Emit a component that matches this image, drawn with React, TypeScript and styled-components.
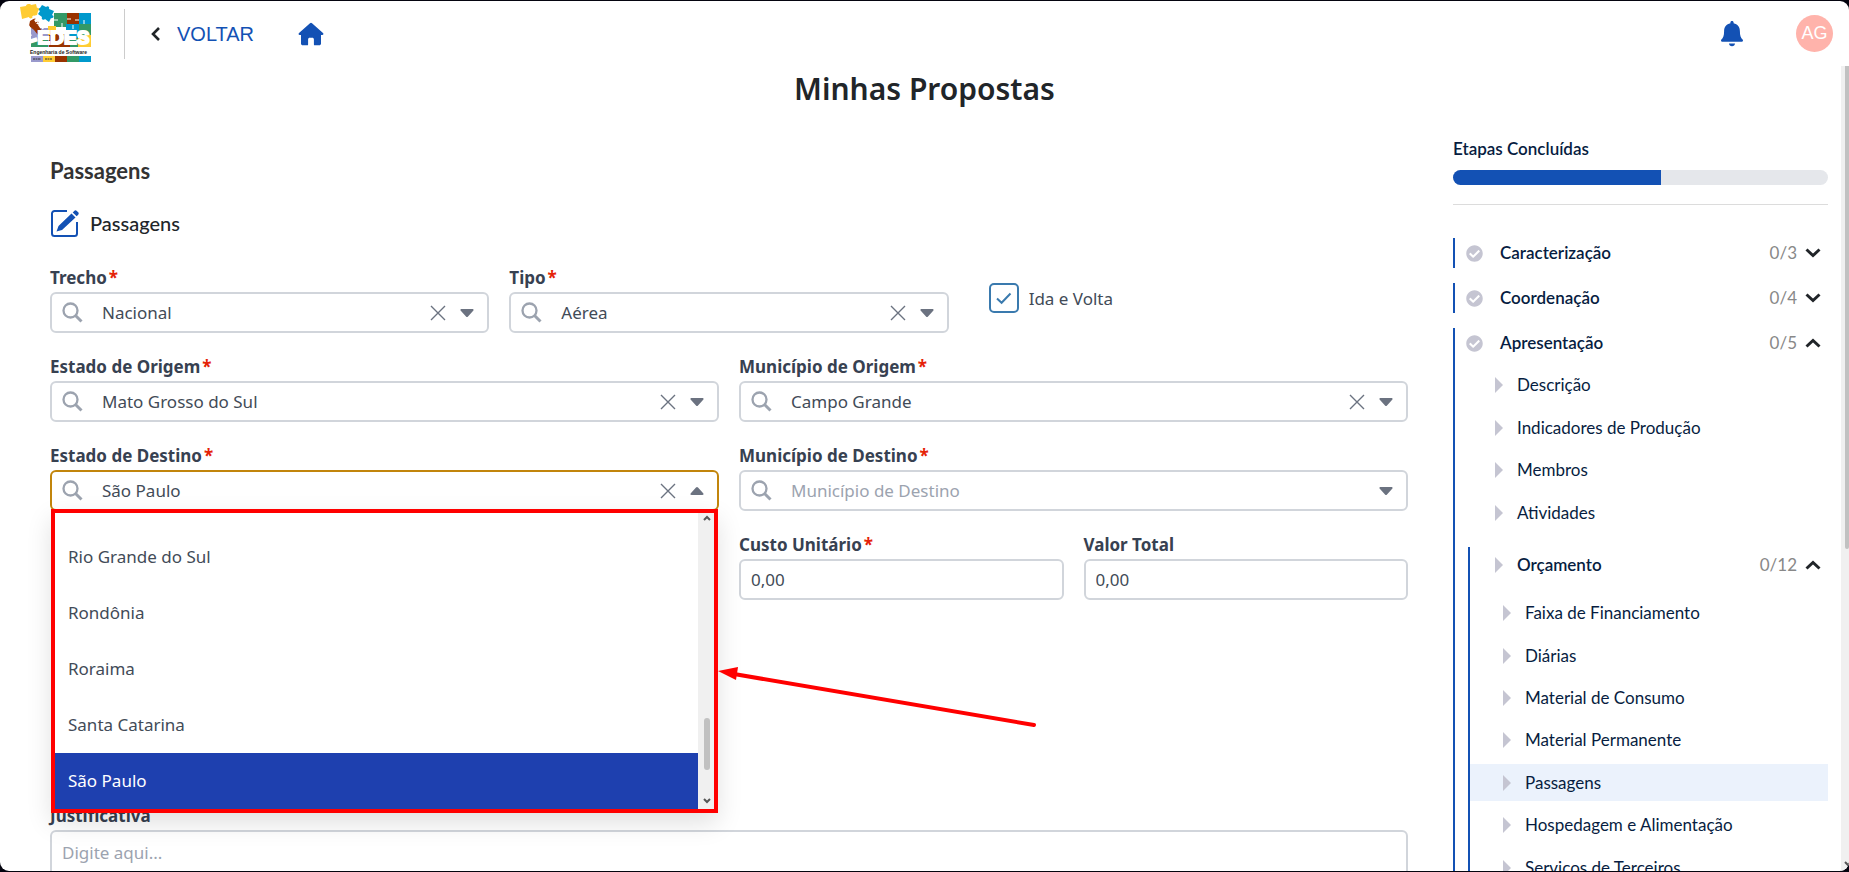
import React from 'react';
import styled, { createGlobalStyle } from 'styled-components';
import { FaCheckCircle } from 'react-icons/fa';

const color = {
  primary: '#1351b4',
  ink: '#212529',
  label: '#374151',
  text: '#424b57',
  muted: '#9ca3af',
  border: '#d1d5db',
  icon: '#6b7280',
  navy: '#071d41',
  mark: '#ff0000',
};

const formFont = "'Noto Sans', 'Open Sans', sans-serif";
const menuFont = "Lato, 'Open Sans', sans-serif";
const barFont = "'Liberation Sans', Arial, sans-serif";

const GlobalStyle = createGlobalStyle`
  *, *::before, *::after { box-sizing: border-box; }
  body { margin: 0; background: #04040f; font-family: ${formFont}; }
  h1, h2, h3, p, ul { margin: 0; padding: 0; }
  ul { list-style: none; }
  button { padding: 0; border: 0; background: none; font: inherit; color: inherit; cursor: pointer; }
  a { color: inherit; text-decoration: none; }
  svg { display: block; flex: none; }
`;

const Backdrop = styled.div`
  height: 100vh;
  padding: 1px 0;
`;

const Page = styled.div`
  position: relative;
  display: flex;
  flex-direction: column;
  height: 100%;
  overflow: hidden;
  border-radius: 9px;
  background: #fff;
`;

const TopBar = styled.header`
  display: flex;
  align-items: center;
  flex: none;
  height: 65px;
  padding: 0 16px 0 20px;
  font-family: ${barFont};
`;

const Divider = styled.span`
  width: 1px;
  height: 50px;
  margin: 0 26px 0 31px;
  background: #ccc;
`;

const BackLink = styled.a`
  display: flex;
  align-items: center;
  gap: 17px;
  color: ${color.primary};
  font-size: 20px;
  line-height: 24px;
`;

const IconButton = styled.button`
  display: flex;
  color: ${color.primary};
`;

const HomeLink = styled.a`
  margin-left: 44px;
  color: ${color.primary};
`;

const Account = styled.div`
  display: flex;
  align-items: center;
  gap: 53px;
  margin-left: auto;
`;

const Avatar = styled.button`
  display: grid;
  place-items: center;
  width: 37px;
  height: 37px;
  border-radius: 50%;
  background: #ffb3ab;
  color: #fff;
  font-size: 18px;
`;

const Content = styled.div`
  flex: 1;
  min-height: 0;
  overflow: hidden;
`;

const Title = styled.h1`
  padding-top: 3px;
  color: ${color.ink};
  font-size: 30px;
  font-weight: 600;
  line-height: 40px;
  text-align: center;
`;

const Columns = styled.div`
  display: grid;
  grid-template-columns: minmax(0, 1fr) 375px;
  gap: 45px;
  padding: 0 21px 0 50px;
`;

const Form = styled.form`
  padding-top: 47px;
`;

const SectionTitle = styled.h2`
  color: #333;
  font-family: ${menuFont};
  font-size: 22px;
  font-weight: 700;
  line-height: 30px;
`;

const Subsection = styled.h3`
  display: flex;
  align-items: center;
  gap: 10px;
  margin: 22px 0 26px;
  color: ${color.ink};
  font-family: ${menuFont};
  font-size: 20px;
  font-weight: 500;
  line-height: 30px;
`;

const Fields = styled.div`
  display: grid;
  grid-template-columns: repeat(12, minmax(0, 1fr));
  gap: 20px;
`;

const FieldBox = styled.div<{ $span: number }>`
  grid-column: span ${(p) => p.$span};
  min-width: 0;
`;

const Label = styled.label`
  display: block;
  height: 28px;
  color: ${color.label};
  font-size: 17px;
  font-weight: 700;
  line-height: 28px;
`;

const Required = styled.span`
  margin-left: 2px;
  color: #e52207;
`;

const Control = styled.div<{ $active?: boolean }>`
  position: relative;
  display: flex;
  align-items: center;
  height: 41px;
  padding: 0 13px 0 10px;
  border: 2px solid ${(p) => (p.$active ? '#c2850c' : color.border)};
  border-radius: 6px;
  background: #fff;
`;

const Input = styled.input`
  flex: 1;
  min-width: 0;
  padding: 0;
  border: 0;
  outline: 0;
  background: none;
  color: ${color.text};
  font: 17px/24px ${formFont};
  &::placeholder { color: ${color.muted}; opacity: 1; }
`;

const ComboInput = styled(Input)`
  margin: 0 12px 0 19px;
`;

const ComboButton = styled.button`
  display: flex;
  margin-left: 14px;
`;

const CheckLabel = styled.label`
  display: flex;
  align-items: center;
  gap: 10px;
  height: 30px;
  margin: 19px 0 0 20px;
  color: ${color.text};
  font-size: 17px;
`;

const Checkbox = styled.input`
  appearance: none;
  width: 30px;
  height: 30px;
  margin: 0;
  border: 2px solid #3a7aae;
  border-radius: 5px;
  background: #fff url("data:image/svg+xml,%3Csvg xmlns='http://www.w3.org/2000/svg' viewBox='0 0 26 26'%3E%3Cpath d='M6 13.5l4.6 4.3L19.500 8.500' fill='none' stroke='%233a7aae' stroke-width='2'/%3E%3C/svg%3E") center / 26px 26px;
`;

const Menu = styled.div`
  position: absolute;
  z-index: 2;
  top: 100%;
  left: -1px;
  right: -1px;
  display: flex;
  height: 304px;
  border: 4px solid ${color.mark};
  background: #fff;
  box-shadow: 0 10px 24px rgba(0, 0, 0, 0.12);
`;

const Options = styled.ul`
  display: flex;
  flex: 1;
  flex-direction: column;
  justify-content: flex-end;
`;

const Option = styled.li<{ $selected?: boolean }>`
  height: 56px;
  padding: 0 13px;
  background: ${(p) => (p.$selected ? '#1e40af' : '#fff')};
  color: ${(p) => (p.$selected ? '#fff' : color.text)};
  font-size: 17px;
  line-height: 56px;
`;

const MenuScroll = styled.div`
  display: flex;
  flex-direction: column;
  align-items: center;
  width: 16px;
  padding: 2px 0 5px 2px;
  background: #f0f0f0;
`;

const MenuThumb = styled.span`
  width: 6px;
  height: 52px;
  margin: auto 0 28px;
  border-radius: 3px;
  background: #c1c1c1;
`;

const Pointer = styled.svg`
  position: absolute;
  top: 154px;
  left: 100%;
  margin-left: 4px;
`;

const Notes = styled.div`
  padding-top: 202px;
`;

const TextArea = styled.textarea`
  display: block;
  width: 100%;
  height: 120px;
  padding: 9px 10px;
  border: 2px solid ${color.border};
  border-radius: 6px;
  outline: 0;
  resize: none;
  color: ${color.text};
  font: 17px/24px ${formFont};
  &::placeholder { color: ${color.muted}; opacity: 1; }
`;

const Sidebar = styled.aside`
  padding-top: 30px;
  color: ${color.navy};
  font-family: ${menuFont};
  font-size: 17px;
  line-height: 20px;
`;

const ProgressTitle = styled.label`
  display: block;
  font-weight: 600;
`;

const Progress = styled.progress`
  appearance: none;
  display: block;
  width: 100%;
  height: 15px;
  margin-top: 11px;
  overflow: hidden;
  border: 0;
  border-radius: 8px;
  background: #e5e7eb;
  &::-webkit-progress-bar { background: #e5e7eb; }
  &::-webkit-progress-value { background: ${color.primary}; }
`;

const Rule = styled.hr`
  height: 1px;
  margin: 19px 0 33px;
  border: 0;
  background: #dcdcdc;
`;

const Stage = styled.section`
  margin-bottom: 15px;
  border-left: 2px solid ${color.primary};
`;

const StageHead = styled.button`
  display: flex;
  align-items: center;
  width: 100%;
  height: 30px;
  padding: 0 7px 0 11px;
  color: #c5c5d2;
`;

const StageName = styled.span`
  margin-left: 17px;
  color: ${color.navy};
  font-weight: 600;
`;

const Count = styled.span`
  margin: 0 8px 0 auto;
  color: #888;
  font-weight: 400;
`;

const Steps = styled.ul<{ $height: number }>`
  display: grid;
  grid-auto-rows: 1fr;
  align-items: center;
  min-height: ${(p) => p.$height}px;
`;

const StepLink = styled.a<{ $current?: boolean; $indent: number }>`
  display: flex;
  align-items: center;
  gap: 14px;
  height: 37px;
  padding-left: ${(p) => p.$indent}px;
  background: ${(p) => (p.$current ? '#ebf2fc' : 'transparent')};
`;

const StageSteps = styled.div`
  padding-top: 6px;
`;

const Budget = styled.section`
  margin: 13px 0 0 13px;
  border-left: 2px solid ${color.primary};
`;

const BudgetHead = styled(StageHead)`
  height: 45px;
  padding-left: 25px;
  padding-bottom: 10px;
`;

const BudgetName = styled(StageName)`
  margin-left: 14px;
`;

const PageScroll = styled.div`
  position: absolute;
  top: 65px;
  right: 0;
  bottom: 0;
  width: 8px;
  padding-left: 4px;
  background: #f0f0f0;
`;

const PageThumb = styled.div`
  height: 60%;
  border-radius: 0 0 2px 2px;
  background: #c1c1c1;
`;

const ScrollArrow = styled.div`
  position: absolute;
  right: -3px;
  bottom: 4px;
`;

const Logo = () => (
  <svg width="73" height="60" viewBox="0 0 73 60" role="img" aria-label="LEDES Engenharia de Software">
    <path fill="#9999cc" d="M11 24h18v19H11z" />
    <path fill="#339966" d="M34 9h13v14H34zM11 36h17v7H11z" />
    <path fill="#993300" d="M47 9h12v12H47zM29 30h21v13H29z" />
    <path fill="#0099cc" d="M59 9h12v18H59zM46 20h13v15H46z" />
    <path fill="#339966" d="M59 20h12v14H59zM50 34h10v9H50z" />
    <path fill="#ffcc33" d="M58 31h13v12H58zM28 22h8v9h-8z" />
    <path fill="#ffcc33" d="M0 3l6-1c0-2 4-3 5-1l5-1 1 4c2-1 3 2 1 3l-1 4-4 1c0 3-4 3-4 1l-7 2z" />
    <path fill="#0099cc" d="M22 1l4 2c2-2 4 0 3 2l5 2-2 4c3 1 1 4-1 3l-2 4-4-3c-2 2-4 0-3-2l-4-3 2-3c-2-1-1-3 0-3z" />
    <path fill="#993300" d="M10 17l5-3 2 4c2-1 3 2 1 3l4 6-4 4-4-5-5-4z" />
    <path fill="none" stroke="#fff" strokeWidth="1" d="M34 16h4M42 23v-4M47 15h4M53 21v4M59 16h-4M64 20v-4M40 30v4M50 36h-4M58 37h4M66 34v4M20 36v-4" />
    <text
      x="6"
      y="40"
      rotate="-18 0 0 0 0"
      fill="#fff"
      stroke="#fff"
      strokeWidth="2"
      fontFamily="'Liberation Sans', sans-serif"
      fontSize="19"
      fontWeight="700"
    >
      LEDES
    </text>
    <path fill="none" stroke="#fff" d="M6 17l3 6-2 2 4 7M13 12l4 7 3 1 3 5" strokeWidth="2" strokeDasharray="3 1" />
    <text x="10" y="50" fontSize="5" fontWeight="700" fill="#222" fontFamily="'Liberation Sans', sans-serif">
      Engenharia de Software
    </text>
    <path fill="#9999cc" d="M11 52h12v6H11z" />
    <path fill="#ffcc33" d="M23 52h12v6H23z" />
    <path fill="#993300" d="M35 52h12v6H35z" />
    <path fill="#339966" d="M47 52h12v6H47z" />
    <path fill="#0099cc" d="M59 52h12v6H59z" />
    <path stroke="#333" d="M13 55h8M25 55h7" strokeDasharray="2 .5" />
  </svg>
);

const BackChevron = () => (
  <svg width="9" height="14" viewBox="0 0 9 14" fill="none" stroke={color.ink} strokeWidth="2.600">
    <path d="M8 1L2 7l6 6" />
  </svg>
);

const HomeIcon = () => (
  <svg width="26" height="24" viewBox="0 0 26 24" fill="currentColor">
    <path d="M12 1.300a1.500 1.500 0 0 1 2 0L25 11c.9.800.4 2-.7 2H23v8.500c0 1-.8 1.800-1.800 1.800h-4.400c-.6 0-.9-.4-.9-.9v-5c0-1-.7-1.700-1.600-1.700h-2.600c-.9 0-1.600.7-1.600 1.700v5c0 .5-.3.9-.9.9H4.800c-1 0-1.800-.8-1.800-1.800V13H1.700C.6 13 .1 11.800 1 11z" />
  </svg>
);

const BellIcon = () => (
  <svg width="22" height="26" viewBox="0 0 22 26" fill="currentColor">
    <path d="M11 0c1 0 1.600.7 1.600 1.600v.6c4 .8 6.300 3.800 6.300 8 0 4.500 1 6.600 2.700 8.300.8.900.3 2.200-.9 2.200H1.300C.1 20.700-.4 19.400.4 18.500 2.100 16.800 3.100 14.700 3.100 10.200c0-4.200 2.300-7.200 6.300-8v-.6C9.400.7 10 0 11 0zM8 22.500h6c0 1.600-1.300 2.700-3 2.700s-3-1.100-3-2.700z" />
  </svg>
);

const EditIcon = () => (
  <svg width="30" height="30" viewBox="0 0 30 30" fill="none" stroke={color.primary} strokeWidth="2">
    <path d="M17 3H4.500A2.500 2.500 0 0 0 2 5.500v20A2.500 2.500 0 0 0 4.500 28h20a2.500 2.500 0 0 0 2.500-2.500V14" />
    <path fill={color.primary} stroke="none" d="M8.500 18L21.500 5.500l4 4L12 22l-5.500 1.500zM22.700 4.400l1.500-1.500c.8-.8 1.800-.8 2.600 0l1.400 1.400c.7.800.7 1.700 0 2.400l-1.500 1.500z" />
  </svg>
);

const SearchIcon = () => (
  <svg width="21" height="21" viewBox="0 0 21 21" fill="none" stroke={color.muted}>
    <circle cx="8.500" cy="8.500" r="7" strokeWidth="2.300" />
    <path d="M13.500 13.500l6 6" strokeWidth="3" />
  </svg>
);

const ClearIcon = () => (
  <svg width="16" height="16" viewBox="0 0 16 16" stroke={color.icon} strokeWidth="1.400">
    <path d="M1 1l14 14M15 1L1 15" />
  </svg>
);

const CaretIcon = ({ up }: { up?: boolean }) => (
  <svg width="14" height="8" viewBox="0 0 14 8" fill={color.icon}>
    {up ? (
      <path d="M1.500 8h11c1 0 1.400-1 .7-1.800L8 .6C7.400-.1 6.600-.1 6 .6L.8 6.200C.1 7 .5 8 1.500 8z" />
    ) : (
      <path d="M1.500 0h11c1 0 1.400 1 .7 1.800L8 7.400c-.6.7-1.400.7-2 0L.8 1.800C.1 1 .5 0 1.500 0z" />
    )}
  </svg>
);

const Chevron = ({ up }: { up?: boolean }) => (
  <svg width="16" height="10" viewBox="0 0 16 10" fill="none" stroke={color.ink} strokeWidth="3">
    <path d={up ? 'M1.500 8.500L8 2.500l6.500 6' : 'M1.500 1.500L8 7.500l6.500-6'} />
  </svg>
);

const SmallChevron = ({ up }: { up?: boolean }) => (
  <svg width="8" height="6" viewBox="0 0 8 6" fill="none" stroke="#555" strokeWidth="2">
    <path d={up ? 'M1 5l3-3 3 3' : 'M1 1l3 3 3-3'} />
  </svg>
);

const StepMarker = () => (
  <svg width="8" height="16" viewBox="0 0 8 16" fill="#c5c5d2">
    <path d="M0 0l8 8-8 8z" />
  </svg>
);

type FieldProps = {
  id: string;
  label: string;
  span: number;
  required?: boolean;
  value?: string;
};

const FieldLabel = ({ id, label, required }: Pick<FieldProps, 'id' | 'label' | 'required'>) => (
  <Label htmlFor={id}>
    {label}
    {required && <Required>*</Required>}
  </Label>
);

const Combo = ({ id, label, span, value, open, children }: FieldProps & { open?: boolean; children?: React.ReactNode }) => (
  <FieldBox $span={span}>
    <FieldLabel id={id} label={label} required />
    <Control $active={open}>
      <SearchIcon />
      <ComboInput id={id} role="combobox" aria-expanded={!!open} defaultValue={value} placeholder={label} />
      {value && (
        <ComboButton type="button" aria-label="Limpar">
          <ClearIcon />
        </ComboButton>
      )}
      <ComboButton type="button" aria-label="Abrir opções">
        <CaretIcon up={open} />
      </ComboButton>
      {children}
    </Control>
  </FieldBox>
);

const Money = ({ id, label, span, required, value }: FieldProps) => (
  <FieldBox $span={span}>
    <FieldLabel id={id} label={label} required={required} />
    <Control>
      <Input id={id} defaultValue={value} />
    </Control>
  </FieldBox>
);

const StateMenu = () => (
  <Menu>
    <Options role="listbox" aria-label="Estado de Destino">
      {['Rio Grande do Sul', 'Rondônia', 'Roraima', 'Santa Catarina', 'São Paulo'].map((name) => (
        <Option key={name} role="option" aria-selected={name === 'São Paulo'} $selected={name === 'São Paulo'}>
          {name}
        </Option>
      ))}
    </Options>
    <MenuScroll>
      <SmallChevron up />
      <MenuThumb />
      <SmallChevron />
    </MenuScroll>
    <Pointer width="320" height="64" viewBox="0 0 320 64" fill={color.mark}>
      <path d="M16 7L316 58" stroke={color.mark} strokeWidth="4" strokeLinecap="round" />
      <path d="M0 4L20 0l-2 13z" />
    </Pointer>
  </Menu>
);

const StepList = ({ names, indent, height, current }: { names: string[]; indent: number; height: number; current?: string }) => (
  <Steps $height={height}>
    {names.map((name) => (
      <li key={name}>
        <StepLink href="#" $indent={indent} $current={name === current}>
          <StepMarker />
          {name}
        </StepLink>
      </li>
    ))}
  </Steps>
);

const StageHeader = ({ name, count, open }: { name: string; count: string; open?: boolean }) => (
  <StageHead type="button" aria-expanded={!!open}>
    <FaCheckCircle size={17} />
    <StageName>{name}</StageName>
    <Count>{count}</Count>
    <Chevron up={open} />
  </StageHead>
);

export default function App() {
  return (
    <Backdrop>
      <GlobalStyle />
      <Page>
        <TopBar>
          <Logo />
          <Divider />
          <BackLink href="#">
            <BackChevron />
            VOLTAR
          </BackLink>
          <HomeLink href="#" aria-label="Início">
            <HomeIcon />
          </HomeLink>
          <Account>
            <IconButton type="button" aria-label="Notificações">
              <BellIcon />
            </IconButton>
            <Avatar type="button">AG</Avatar>
          </Account>
        </TopBar>
        <Content>
          <Title>Minhas Propostas</Title>
          <Columns>
            <Form>
              <SectionTitle>Passagens</SectionTitle>
              <Subsection>
                <EditIcon />
                Passagens
              </Subsection>
              <Fields>
                <Combo id="trecho" label="Trecho" span={4} value="Nacional" />
                <Combo id="tipo" label="Tipo" span={4} value="Aérea" />
                <FieldBox $span={4}>
                  <CheckLabel>
                    <Checkbox type="checkbox" defaultChecked />
                    Ida e Volta
                  </CheckLabel>
                </FieldBox>
                <Combo id="uf-origem" label="Estado de Origem" span={6} value="Mato Grosso do Sul" />
                <Combo id="cidade-origem" label="Município de Origem" span={6} value="Campo Grande" />
                <Combo id="uf-destino" label="Estado de Destino" span={6} value="São Paulo" open>
                  <StateMenu />
                </Combo>
                <Combo id="cidade-destino" label="Município de Destino" span={6} />
                <FieldBox $span={6} />
                <Money id="custo" label="Custo Unitário" span={3} required value="0,00" />
                <Money id="total" label="Valor Total" span={3} value="0,00" />
              </Fields>
              <Notes>
                <FieldLabel id="justificativa" label="Justificativa" />
                <TextArea id="justificativa" placeholder="Digite aqui..." />
              </Notes>
            </Form>
            <Sidebar>
              <ProgressTitle htmlFor="etapas">Etapas Concluídas</ProgressTitle>
              <Progress id="etapas" max={18} value={10} />
              <Rule />
              <Stage>
                <StageHeader name="Caracterização" count="0/3" />
              </Stage>
              <Stage>
                <StageHeader name="Coordenação" count="0/4" />
              </Stage>
              <Stage>
                <StageHeader name="Apresentação" count="0/5" open />
                <StageSteps>
                  <StepList names={['Descrição', 'Indicadores de Produção', 'Membros', 'Atividades']} indent={40} height={170} />
                </StageSteps>
                <Budget>
                  <BudgetHead type="button" aria-expanded>
                    <StepMarker />
                    <BudgetName>Orçamento</BudgetName>
                    <Count>0/12</Count>
                    <Chevron up />
                  </BudgetHead>
                  <StepList
                    names={[
                      'Faixa de Financiamento',
                      'Diárias',
                      'Material de Consumo',
                      'Material Permanente',
                      'Passagens',
                      'Hospedagem e Alimentação',
                      'Serviços de Terceiros',
                    ]}
                    indent={33}
                    height={297}
                    current="Passagens"
                  />
                </Budget>
              </Stage>
            </Sidebar>
          </Columns>
        </Content>
        <PageScroll>
          <PageThumb />
          <ScrollArrow>
            <SmallChevron />
          </ScrollArrow>
        </PageScroll>
      </Page>
    </Backdrop>
  );
}
